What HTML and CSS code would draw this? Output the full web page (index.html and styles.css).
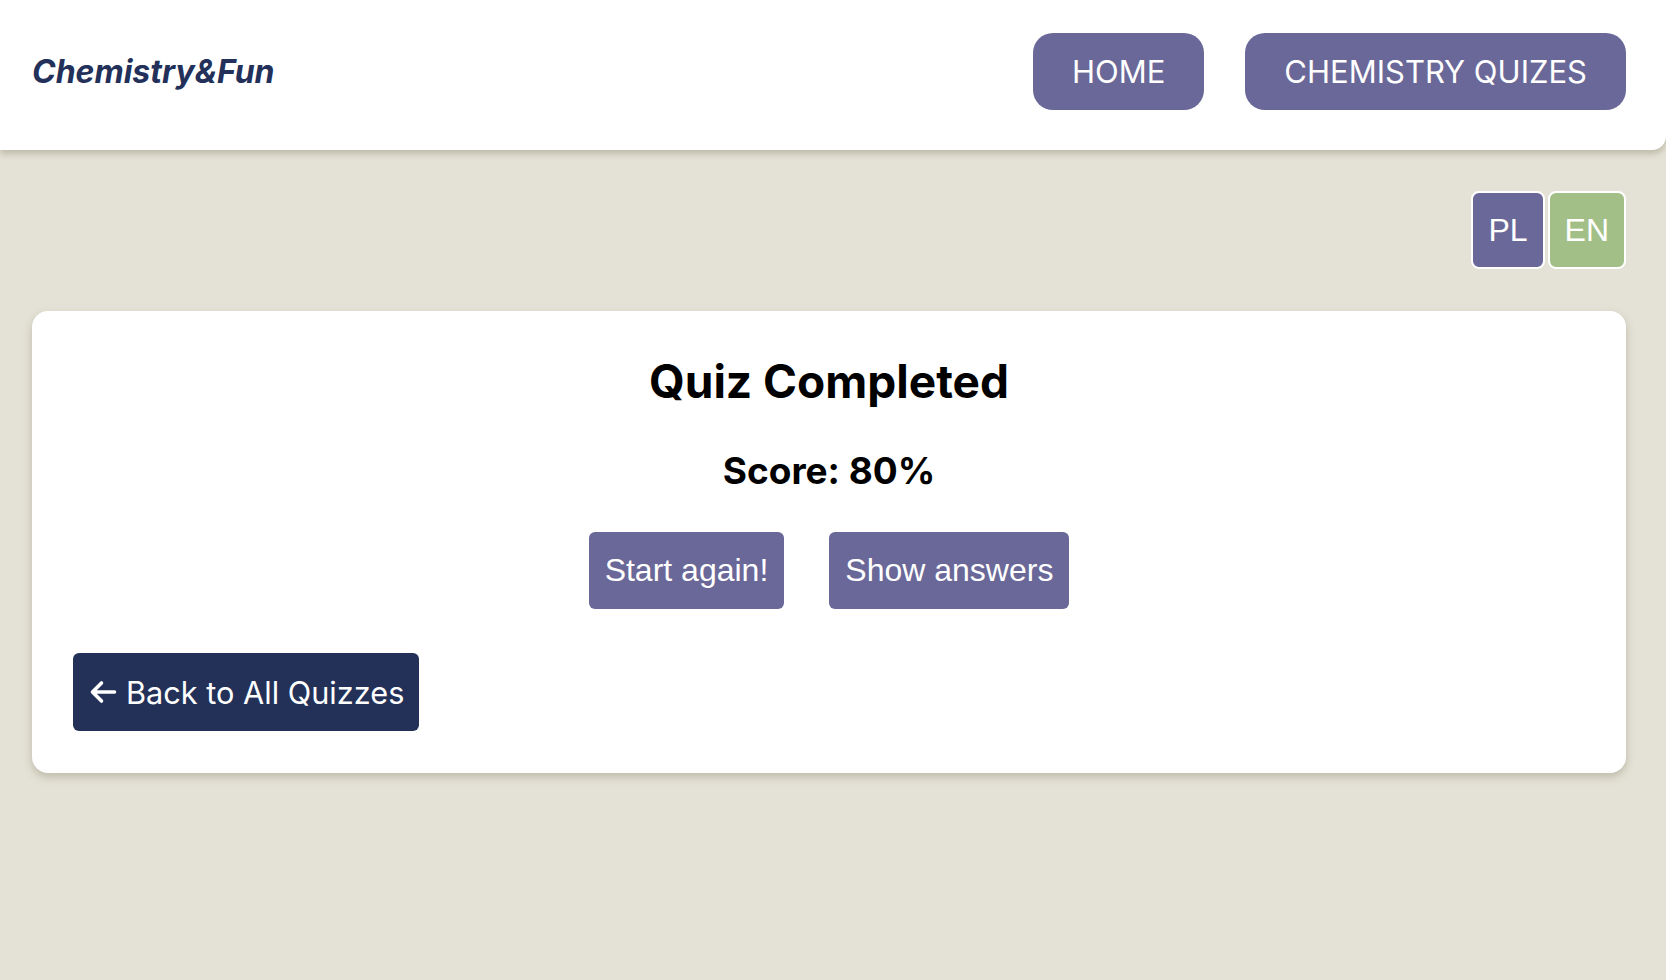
FILE: index.html
```html
<!DOCTYPE html>
<html lang="en">
<head>
<meta charset="utf-8">
<title>Chemistry&amp;Fun</title>
<link rel="stylesheet" href="styles.css">
</head>
<body>
<header class="topbar">
  <a class="logo" href="#">Chemistry&amp;Fun</a>
  <nav class="nav">
    <a class="nav-btn" href="#">HOME</a>
    <a class="nav-btn" href="#">CHEMISTRY QUIZES</a>
  </nav>
</header>
<main class="main">
  <div class="lang">
    <button class="lang-btn lang-pl">PL</button>
    <button class="lang-btn lang-en">EN</button>
  </div>
  <section class="card">
    <h2 class="title">Quiz Completed</h2>
    <p class="score">Score: 80%</p>
    <div class="actions">
      <button class="act-btn">Start again!</button>
      <button class="act-btn">Show answers</button>
    </div>
    <a class="back-btn" href="#">
      <svg class="back-icon" viewBox="0 0 28 24" width="28" height="24" aria-hidden="true">
        <path d="M25.5 12H3.5M12.5 3l-9 9 9 9" fill="none" stroke="#fff" stroke-width="3.6" stroke-linecap="round" stroke-linejoin="round"/>
      </svg>
      <span>Back to All Quizzes</span>
    </a>
  </section>
</main>
</body>
</html>
```

FILE: styles.css
```css
* { box-sizing: border-box; }
html, body { margin: 0; padding: 0; }
body {
  background: #e4e2d6;
  font-family: Inter, "Liberation Sans", Arial, sans-serif;
  min-height: 980px;
}
.topbar {
  height: 150px;
  background: #fff;
  display: flex;
  align-items: center;
  justify-content: space-between;
  padding: 0 40px 8px 32px;
  border-bottom-right-radius: 14px;
  box-shadow: 0 4px 6px rgba(120, 115, 90, 0.35);
  position: relative;
}
.logo {
  font-weight: 700;
  font-style: italic;
  font-size: 32px;
  color: #22305a;
  text-decoration: none;
}
.nav {
  display: flex;
  gap: 41px;
}
.nav-btn {
  display: flex;
  align-items: center;
  height: 77px;
  padding: 0 39px;
  background: #6a6898;
  color: #fff;
  border-radius: 20px;
  font-size: 31px;
  font-weight: 400;
  text-decoration: none;
}
.main {
  padding: 41px 40px 0 32px;
}
.lang {
  display: flex;
  justify-content: flex-end;
  gap: 3px;
}
.lang-btn {
  height: 78px;
  border: 2px solid #fff;
  border-radius: 8px;
  color: #fff;
  font-family: "Liberation Sans", Arial, sans-serif;
  font-size: 32px;
  padding: 0 15px;
}
.lang-pl { background: #6a6898; }
.lang-en { background: #a3bf88; }
.card {
  margin-top: 42px;
  background: #fff;
  border-radius: 16px;
  box-shadow: 0 4px 8px rgba(120, 115, 90, 0.35);
  padding: 42px 41px 42px;
  display: flex;
  flex-direction: column;
}
.title {
  margin: 0;
  text-align: center;
  font-size: 46px;
  font-weight: 700;
  color: #000;
}
.score {
  margin: 39px 0 0;
  text-align: center;
  font-size: 37px;
  font-weight: 700;
  color: #000;
}
.actions {
  display: flex;
  justify-content: center;
  gap: 45px;
  margin-top: 39px;
}
.act-btn {
  height: 77px;
  padding: 0 16px;
  border: none;
  border-radius: 6px;
  background: #6a6898;
  color: #fff;
  font-family: "Liberation Sans", Arial, sans-serif;
  font-size: 32px;
}
.back-btn {
  align-self: flex-start;
  margin-top: 44px;
  display: flex;
  align-items: center;
  gap: 9px;
  height: 78px;
  padding: 0 15px 0 16px;
  background: #233159;
  color: #fff;
  border-radius: 6px;
  font-size: 30.7px;
  text-decoration: none;
}
.back-icon { display: block; }
```
